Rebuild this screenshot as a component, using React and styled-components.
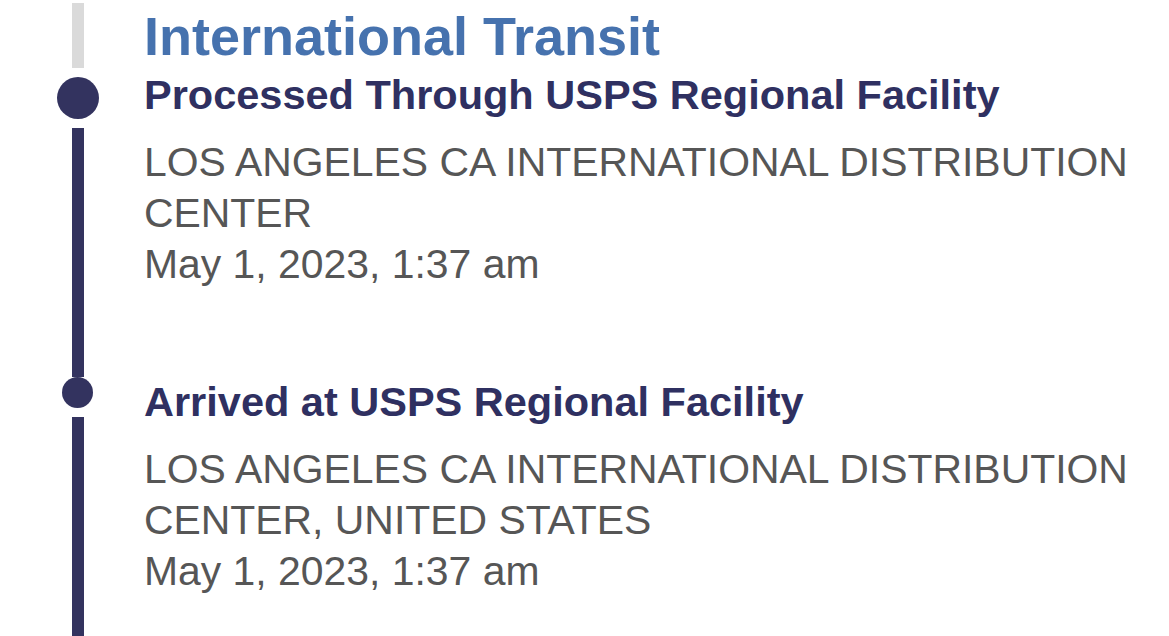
import React from 'react';
import styled, { createGlobalStyle } from 'styled-components';

const GlobalStyle = createGlobalStyle`
  html, body {
    margin: 0;
    padding: 0;
    background: #ffffff;
    overflow: hidden;
  }
  body {
    font-family: "Liberation Sans", Arial, Helvetica, sans-serif;
  }
`;

const Timeline = styled.div`
  display: flex;
  flex-direction: column;
  width: 1169px;
`;

const Event = styled.div`
  display: grid;
  grid-template-columns: 144px 1fr;
`;

const RailColumn = styled.div`
  display: flex;
`;

const Rail = styled.div`
  display: flex;
  flex-direction: column;
  align-items: center;
  width: 43px;
  margin-left: 56px;
  gap: 9px;
`;

const Segment = styled.div`
  width: 12px;
  background: ${props => (props.muted ? '#dadada' : '#33335f')};
  ${props => (props.height ? `height: ${props.height}px; flex: none;` : 'flex: 1;')}
  margin-top: ${props => props.offset || 0}px;
`;

const Dot = styled.div`
  flex: none;
  width: ${props => props.size}px;
  height: ${props => props.size}px;
  border-radius: 50%;
  background: #33335f;
`;

const Content = styled.div`
  display: flex;
  flex-direction: column;
  padding-top: ${props => props.top || 0}px;
  padding-bottom: ${props => props.bottom || 0}px;
  padding-right: 10px;
`;

const Section = styled.h1`
  margin: 0;
  font-size: 54px;
  line-height: 60px;
  font-weight: 700;
  color: #4672ae;
`;

const Title = styled.h2`
  margin: ${props => props.gap || 0}px 0 0;
  font-size: 41.5px;
  line-height: 48px;
  font-weight: 700;
  color: #2f3061;
`;

const Details = styled.div`
  margin-top: 18px;
  font-size: 40.9px;
  line-height: 51px;
  color: #565656;
`;

const Line = styled.div``;

const events = [
  {
    section: 'International Transit',
    title: 'Processed Through USPS Regional Facility',
    location: 'LOS ANGELES CA INTERNATIONAL DISTRIBUTION CENTER',
    date: 'May 1, 2023, 1:37 am',
  },
  {
    title: 'Arrived at USPS Regional Facility',
    location: 'LOS ANGELES CA INTERNATIONAL DISTRIBUTION CENTER, UNITED STATES',
    date: 'May 1, 2023, 1:37 am',
  },
];

export default function App() {
  return (
    <>
      <GlobalStyle />
      <Timeline>
        {events.map((ev, i) => {
          const current = i === 0;
          return (
            <Event key={i}>
              <RailColumn>
                <Rail>
                  {current && <Segment muted height={65} offset={3} />}
                  <Dot size={current ? 42 : 31} />
                  <Segment />
                </Rail>
              </RailColumn>
              <Content top={current ? 6 : 1} bottom={current ? 87 : 60}>
                {ev.section && <Section>{ev.section}</Section>}
                <Title gap={ev.section ? 5 : 0}>{ev.title}</Title>
                <Details>
                  <Line>{ev.location}</Line>
                  <Line>{ev.date}</Line>
                </Details>
              </Content>
            </Event>
          );
        })}
      </Timeline>
    </>
  );
}
